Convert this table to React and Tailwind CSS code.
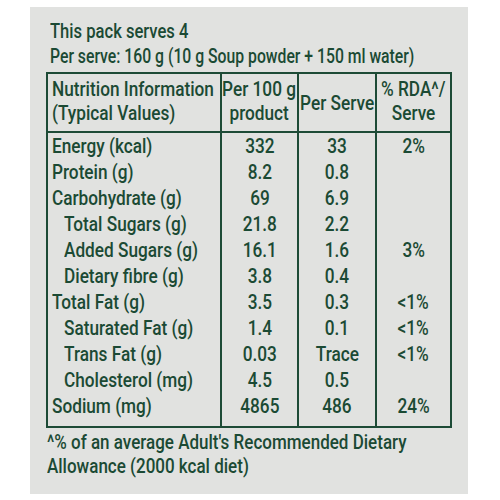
const rows = [
  ["Energy (kcal)", "332", "33", "2%", false],
  ["Protein (g)", "8.2", "0.8", "", false],
  ["Carbohydrate (g)", "69", "6.9", "", false],
  ["Total Sugars (g)", "21.8", "2.2", "", true],
  ["Added Sugars (g)", "16.1", "1.6", "3%", true],
  ["Dietary fibre (g)", "3.8", "0.4", "", true],
  ["Total Fat (g)", "3.5", "0.3", "<1%", false],
  ["Saturated Fat (g)", "1.4", "0.1", "<1%", true],
  ["Trans Fat (g)", "0.03", "Trace", "<1%", true],
  ["Cholesterol (mg)", "4.5", "0.5", "", true],
  ["Sodium (mg)", "4865", "486", "24%", false],
];

function L({ children }) {
  return <span className="block whitespace-nowrap origin-left scale-x-[0.82]">{children}</span>;
}

function C({ children }) {
  return <span className="block whitespace-nowrap origin-center scale-x-[0.82]">{children}</span>;
}

export default function App() {
  return (
    <div
      className="w-[500px] h-[500px] bg-white pt-[7px] pl-[30px] text-[#1b4a34] text-[21px] font-medium"
      style={{ fontFamily: "Roboto, 'Liberation Sans', sans-serif" }}
    >
      <div className="w-[438px] h-[487px] bg-[#e1e2e0] pt-[12px] pl-[16px]">
        <div className="pl-[4px] leading-[25px]">
          <span className="block whitespace-nowrap origin-left scale-x-[0.79]">This pack serves 4</span>
          <span className="block whitespace-nowrap origin-left scale-x-[0.75]">
            Per serve: 160 g (10 g Soup powder + 150 ml water)
          </span>
        </div>

        <div className="mt-[3px] w-[406px] h-[356px] border-2 border-[#1d4b36]">
          <div className="grid grid-cols-[174px_77px_78px_73px] h-[59px] border-b-2 border-[#1d4b36] leading-[24px]">
            <div className="border-r-2 border-[#1d4b36] pt-[3px] pl-[4px] overflow-hidden">
              <L>Nutrition Information</L>
              <L>(Typical Values)</L>
            </div>
            <div className="border-r-2 border-[#1d4b36] pt-[3px] flex flex-col items-center">
              <C>Per 100 g</C>
              <C>product</C>
            </div>
            <div className="border-r-2 border-[#1d4b36] flex flex-col items-center justify-center">
              <C>Per Serve</C>
            </div>
            <div className="pt-[3px] flex flex-col items-center">
              <C>% RDA^/</C>
              <C>Serve</C>
            </div>
          </div>

          <div className="grid grid-cols-[174px_77px_78px_73px] h-[293px] leading-[26px]">
            <div className="border-r-2 border-[#1d4b36] overflow-hidden">
              {rows.map((r) => (
                <div key={r[0]} className={r[4] ? "h-[26px] pl-[16px]" : "h-[26px] pl-[4px]"}>
                  <L>{r[0]}</L>
                </div>
              ))}
            </div>
            <div className="border-r-2 border-[#1d4b36] flex flex-col items-center">
              {rows.map((r) => (
                <div key={r[0]} className="h-[26px]">
                  <C>{r[1]}</C>
                </div>
              ))}
            </div>
            <div className="border-r-2 border-[#1d4b36] flex flex-col items-center">
              {rows.map((r) => (
                <div key={r[0]} className="h-[26px]">
                  <C>{r[2]}</C>
                </div>
              ))}
            </div>
            <div className="flex flex-col items-center">
              {rows.map((r) => (
                <div key={r[0]} className="h-[26px]">
                  <C>{r[3]}</C>
                </div>
              ))}
            </div>
          </div>
        </div>

        <div className="mt-[2px] pl-[1px] leading-[24px]">
          <span className="block whitespace-nowrap origin-left scale-x-[0.81]">
            ^% of an average Adult's Recommended Dietary
          </span>
          <span className="block whitespace-nowrap origin-left scale-x-[0.81]">Allowance (2000 kcal diet)</span>
        </div>
      </div>
    </div>
  );
}
